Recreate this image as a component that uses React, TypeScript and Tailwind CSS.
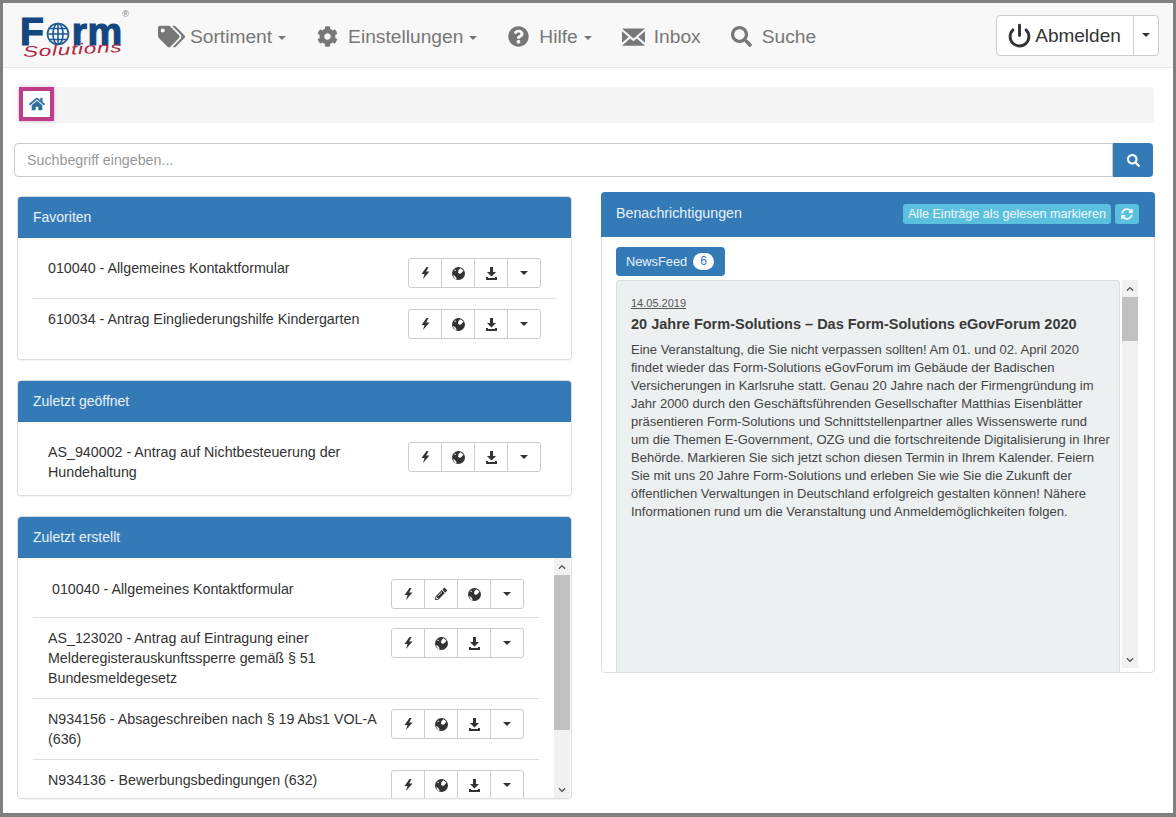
import React from 'react';
import {
  FaTags,
  FaCog,
  FaQuestionCircle,
  FaSearch,
  FaHome,
  FaPencilAlt,
  FaSyncAlt,
  FaChevronUp,
  FaChevronDown,
} from 'react-icons/fa';
import { FiPower } from 'react-icons/fi';

const SaveIcon = () => (
  <svg width="13" height="13" viewBox="0 0 13 13" fill="currentColor">
    <path d="M5 0h3v5h3l-4.500 4.500L2 5h3z" />
    <path d="M1 10h2v1h7v-1h2v3H1z" />
  </svg>
);

const FlashIcon = () => (
  <svg width="9" height="12" viewBox="0 0 9 12" fill="currentColor">
    <path d="M5.500 0L0.500 7H3.500L2 12L8.500 4.500H5.200L7.500 0z" />
  </svg>
);

const GlobeIcon = () => (
  <svg width="13" height="13" viewBox="0 0 13 13">
    <circle cx="6.500" cy="6.500" r="6.500" fill="currentColor" />
    <path d="M6.500 3L8.500 1.200L11.500 3.500L10 5.500L8 7L6 5.800z" fill="#fff" />
    <path d="M1.800 3.200L3.500 2.400L4 3.900z" fill="#fff" />
    <path d="M0.800 8.200L2.800 8.800L4.800 11.500L3.300 12z" fill="#fff" />
  </svg>
);

const EnvelopeIcon = () => (
  <svg width="23" height="18" viewBox="0 0 24 18" fill="currentColor">
    <path d="M0 0h24L12 10.500z" />
    <path d="M0 3l7 6-7 6z" />
    <path d="M24 3l-7 6 7 6z" />
    <path d="M0 18l8.500-7.500L12 13.500l3.500-3L24 18z" />
  </svg>
);

const Caret = ({ className = '' }: { className?: string }) => (
  <span className={`inline-block w-0 h-0 border-x-[4px] border-x-transparent border-t-[4px] border-t-current ${className}`} />
);

type ActionKind = 'flash' | 'globe' | 'save' | 'edit' | 'caret';

const ActionGroup = ({ actions = ['flash', 'globe', 'save', 'caret'] as ActionKind[] }) => (
  <div className="flex shrink-0 h-[30px] w-[133px] border border-[#ccc] rounded-[3px] bg-white text-[#333]">
    {actions.map((a, i) => (
      <div key={i} className={`flex-1 flex items-center justify-center ${i > 0 ? 'border-l border-[#ccc]' : ''}`}>
        {a === 'flash' && <FlashIcon />}
        {a === 'globe' && <GlobeIcon />}
        {a === 'save' && <SaveIcon />}
        {a === 'edit' && <FaPencilAlt size={12} />}
        {a === 'caret' && <Caret />}
      </div>
    ))}
  </div>
);

const Panel = ({ title, className = '', children }: { title: string; className?: string; children: React.ReactNode }) => (
  <div className={`border border-[#ddd] rounded-[4px] bg-white shadow-[0_1px_1px_rgba(0,0,0,0.05)] ${className}`}>
    <div className="h-[41px] bg-[#337ab7] text-white/90 text-[14px] flex items-center pl-[15px] pb-[1px] rounded-t-[3px]">{title}</div>
    {children}
  </div>
);

const Scrollbar = ({ thumbClass, className = '' }: { thumbClass: string; className?: string }) => (
  <div className={`w-[16px] mr-[1px] shrink-0 bg-[#f1f1f1] flex flex-col text-[#505050] ${className}`}>
    <div className="h-[17px] flex items-center justify-center shrink-0">
      <FaChevronUp size={8} />
    </div>
    <div className={`bg-[#c1c1c1] shrink-0 ${thumbClass}`} />
    <div className="flex-1" />
    <div className="h-[17px] flex items-center justify-center shrink-0">
      <FaChevronDown size={8} />
    </div>
  </div>
);

const Logo = () => (
  <div className="w-[110px] h-[46px] flex flex-col items-start relative leading-none">
    <div className="flex items-center h-[31px] text-[#14477f] font-bold text-[39px] leading-[31px] [-webkit-text-stroke:1.2px_#14477f] mt-[4px]">
      <span>F</span>
      <svg width="24" height="24" viewBox="0 0 24 24" fill="none" stroke="#1c5a97" strokeWidth="1.600" className="mt-[4px] ml-[2px] mr-[2px]">
        <circle cx="12" cy="12" r="10.500" />
        <ellipse cx="12" cy="12" rx="5" ry="10.500" />
        <path d="M12 1.500v21M1.500 12h21M3 6.500h18M3 17.500h18" />
      </svg>
      <span className="tracking-[0.5px]">rm</span>
    </div>
    <div className="absolute left-[3px] top-[32px] text-[#b3243f] italic text-[15px] leading-[15px] tracking-[0.5px] -rotate-[3deg] origin-left scale-x-[1.5]">
      Solutions
    </div>
    <span className="absolute right-[1px] top-[-2px] text-[9px] text-[#777]">®</span>
  </div>
);

const NavItem = ({ icon, label, caret, iconClass }: { icon: React.ReactNode; label: string; caret?: boolean; iconClass: string }) => (
  <div className="flex items-center text-[#777] text-[19.200px]">
    <span className={`flex items-center ${iconClass}`}>{icon}</span>
    <span>{label}</span>
    {caret && <Caret className="ml-[6px] mt-[2px]" />}
  </div>
);

const newsLines = [
  'Eine Veranstaltung, die Sie nicht verpassen sollten! Am 01. und 02. April 2020',
  'findet wieder das Form-Solutions eGovForum im Gebäude der Badischen',
  'Versicherungen in Karlsruhe statt. Genau 20 Jahre nach der Firmengründung im',
  'Jahr 2000 durch den Geschäftsführenden Gesellschafter Matthias Eisenblätter',
  'präsentieren Form-Solutions und Schnittstellenpartner alles Wissenswerte rund',
  'um die Themen E-Government, OZG und die fortschreitende Digitalisierung in Ihrer',
  'Behörde. Markieren Sie sich jetzt schon diesen Termin in Ihrem Kalender. Feiern',
  'Sie mit uns 20 Jahre Form-Solutions und erleben Sie wie Sie die Zukunft der',
  'öffentlichen Verwaltungen in Deutschland erfolgreich gestalten können! Nähere',
  'Informationen rund um die Veranstaltung und Anmeldemöglichkeiten folgen.',
];

export default function App() {
  return (
    <div className="w-[1176px] h-[817px] overflow-hidden bg-white border-t-[3px] border-l-[3px] border-r-[3px] border-b-[4px] border-[#808080] font-['Liberation_Sans',Arial,sans-serif] text-[#333] text-[14.250px] leading-[20px]">
      {/* Navbar */}
      <div className="h-[65px] bg-[#f8f8f8] border-b border-[#e7e7e7] flex items-center pl-[17px] pr-[14px]">
        <Logo />
        <div className="flex items-center gap-[30px] ml-[28px] mt-[3px]">
          <NavItem icon={<FaTags size={27} />} iconClass="mr-[5px]" label="Sortiment" caret />
          <NavItem icon={<FaCog size={21} />} iconClass="ml-[1px] mr-[10px]" label="Einstellungen" caret />
          <NavItem icon={<FaQuestionCircle size={21} />} iconClass="ml-[1px] mr-[10px]" label="Hilfe" caret />
          <NavItem icon={<EnvelopeIcon />} iconClass="mr-[9px]" label="Inbox" />
          <NavItem icon={<FaSearch size={21} />} iconClass="mr-[10px]" label="Suche" />
        </div>
        <div className="ml-auto flex h-[41px] w-[163px] border border-[#ccc] rounded-[4px] bg-white text-[#333] text-[19px]">
          <div className="flex-1 flex items-center justify-center gap-[3px] pr-[2px]">
            <FiPower size={25} strokeWidth={2.800} />
            <span className="mt-[1px]">Abmelden</span>
          </div>
          <div className="w-[25px] border-l border-[#ccc] flex items-center justify-center">
            <Caret />
          </div>
        </div>
      </div>

      {/* Breadcrumb */}
      <div className="mt-[19px] ml-[15px] w-[1136px] h-[36px] bg-[#f5f5f5] rounded-[4px] flex items-start">
        <div className="w-[35px] h-[34px] ml-[1px] border-[4px] border-[#bb3f88] bg-white flex items-center justify-center text-[#2f6f9f] shadow-[0_0_4px_rgba(192,64,138,0.4)]">
          <FaHome size={16} />
        </div>
      </div>

      {/* Search */}
      <div className="mt-[20px] ml-[11px] w-[1139px] h-[34px] flex">
        <div className="flex-1 border border-[#ccc] rounded-l-[4px] flex items-center pl-[12px] text-[#999] text-[14.250px]">
          Suchbegriff eingeben...
        </div>
        <div className="w-[40px] bg-[#337ab7] rounded-r-[4px] flex items-center justify-center text-white">
          <FaSearch size={13} />
        </div>
      </div>

      <div className="flex items-start ml-[14px] gap-[29px]">
        {/* Left column */}
        <div className="w-[555px] pt-[19px] flex flex-col gap-[20px]">
          <Panel title="Favoriten">
            <div className="pt-[20px] pb-[20px] px-[15px]">
              <div className="flex justify-between pl-[15px] pr-[15px] pb-[10px] border-b border-[#ddd]">
                <span>010040 - Allgemeines Kontaktformular</span>
                <ActionGroup />
              </div>
              <div className="flex justify-between pl-[15px] pr-[15px] pt-[10px]">
                <span>610034 - Antrag Eingliederungshilfe Kindergarten</span>
                <ActionGroup />
              </div>
            </div>
          </Panel>

          <Panel title="Zuletzt geöffnet">
            <div className="pt-[20px] pb-[13px] px-[15px]">
              <div className="flex justify-between pl-[15px] pr-[15px]">
                <span className="w-[310px]">AS_940002 - Antrag auf Nichtbesteuerung der Hundehaltung</span>
                <ActionGroup />
              </div>
            </div>
          </Panel>

          <Panel title="Zuletzt erstellt" className="h-[283px] overflow-hidden">
            <div className="flex h-[240px]">
              <div className="flex-1 overflow-hidden pl-[15px] pr-[15px]">
                <div className="flex justify-between pl-[19px] pr-[15px] pt-[21px] pb-[8px] border-b border-[#ddd]">
                  <span>010040 - Allgemeines Kontaktformular</span>
                  <ActionGroup actions={['flash', 'edit', 'globe', 'caret']} />
                </div>
                <div className="flex justify-between pl-[15px] pr-[15px] py-[10px] border-b border-[#ddd]">
                  <span className="w-[290px]">AS_123020 - Antrag auf Eintragung einer Melderegisterauskunftssperre gemäß § 51 Bundesmeldegesetz</span>
                  <ActionGroup />
                </div>
                <div className="flex justify-between pl-[15px] pr-[15px] py-[10px] border-b border-[#ddd]">
                  <span className="w-[335px]">N934156 - Absageschreiben nach § 19 Abs1 VOL-A (636)</span>
                  <ActionGroup />
                </div>
                <div className="flex justify-between pl-[15px] pr-[15px] py-[10px]">
                  <span>N934136 - Bewerbungsbedingungen (632)</span>
                  <ActionGroup />
                </div>
              </div>
              <Scrollbar thumbClass="h-[155px]" />
            </div>
          </Panel>
        </div>

        {/* Right column */}
        <div className="w-[554px] pt-[15px]">
          <div className="h-[481px] border border-[#ddd] rounded-[4px] bg-white flex flex-col">
            <div className="h-[45px] shrink-0 -mx-[1px] -mt-[1px] rounded-t-[4px] bg-[#337ab7] text-white/90 flex items-center pl-[15px] pr-[16px] pb-[4px]">
              <span>Benachrichtigungen</span>
              <div className="ml-auto mt-[3px] flex gap-[4px]">
                <div className="h-[20px] w-[208px] bg-[#5bc0de] rounded-[3px] text-white/90 text-[12.600px] leading-[20px] text-center">
                  Alle Einträge als gelesen markieren
                </div>
                <div className="h-[20px] w-[24px] bg-[#5bc0de] rounded-[3px] text-white/90 flex items-center justify-center">
                  <FaSyncAlt size={12} />
                </div>
              </div>
            </div>
            <div className="flex-1 min-h-0 pl-[14px] pr-[15px] flex flex-col">
              <div className="mt-[10px] h-[29px] w-[109px] shrink-0 bg-[#337ab7] rounded-[4px] text-white/90 text-[12.800px] flex items-center pl-[10px]">
                NewsFeed
                <span className="ml-[6px] w-[21px] h-[17px] rounded-full bg-white text-[#337ab7] text-[12px] leading-[17px] text-center">6</span>
              </div>
              <div className="flex-1 min-h-0 mt-[4px] flex gap-[2px]">
                <div className="w-[505px] bg-[#ecf0f1] border border-[#ddd] border-b-0 rounded-t-[4px] px-[14px] pt-[15px] overflow-hidden">
                  <div className="text-[11px] leading-[14px] text-[#555] underline">14.05.2019</div>
                  <div className="mt-[4px] font-bold text-[14.500px] leading-[20px] text-[#3a3a3a]">
                    20 Jahre Form-Solutions – Das Form-Solutions eGovForum 2020
                  </div>
                  <div className="mt-[7px] text-[13px] leading-[18px] text-[#444] whitespace-nowrap">
                    {newsLines.map((line, i) => (
                      <div key={i}>{line}</div>
                    ))}
                  </div>
                </div>
                <Scrollbar thumbClass="h-[44px]" className="mb-[4px]" />
              </div>
            </div>
          </div>
        </div>
      </div>
    </div>
  );
}
